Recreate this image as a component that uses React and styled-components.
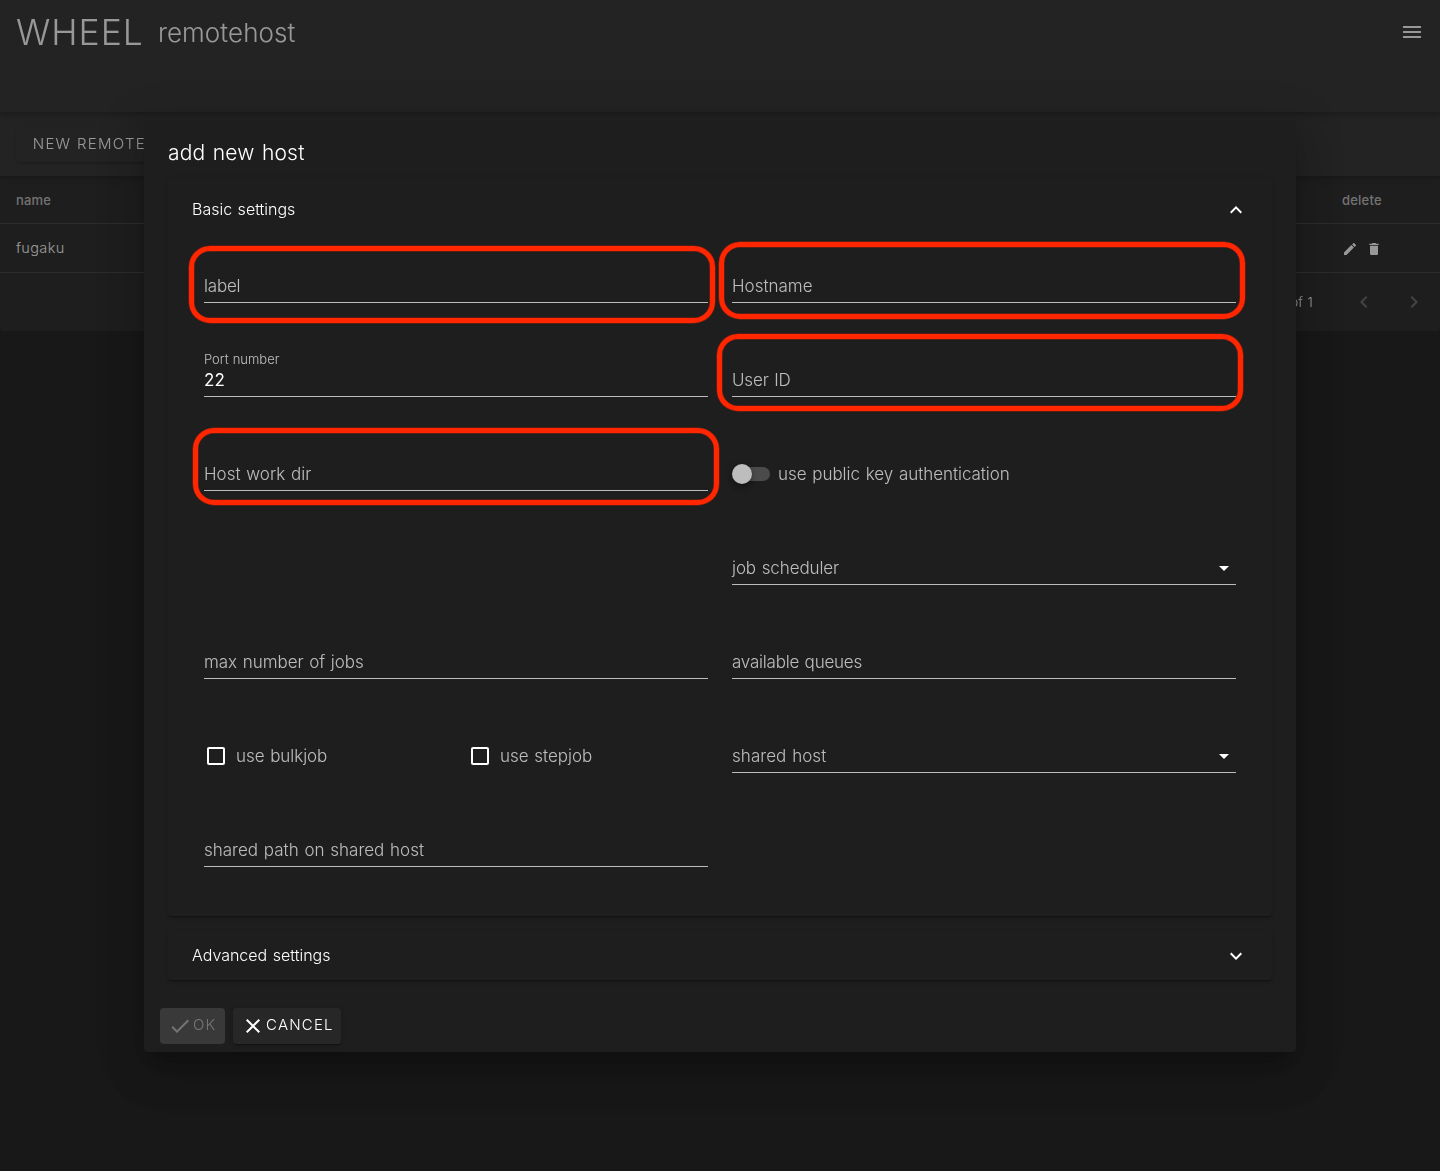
import React from "react";
import styled, { createGlobalStyle } from "styled-components";

const GlobalStyle = createGlobalStyle`
  *, *::before, *::after { box-sizing: border-box; }
  html, body { margin: 0; padding: 0; background: #121212; }
  body {
    font-family: Inter, "Liberation Sans", "Noto Sans CJK JP", sans-serif;
    font-weight: 300;
    color: #fff;
    overflow: hidden;
    -webkit-font-smoothing: antialiased;
  }
`;

const paths = {
  menu: "M3,6H21V8H3V6M3,11H21V13H3V11M3,16H21V18H3V16Z",
  chevronUp: "M7.41,15.41L12,10.83L16.59,15.41L18,14L12,8L6,14L7.41,15.41Z",
  chevronDown: "M7.41,8.58L12,13.17L16.59,8.58L18,10L12,16L6,10L7.41,8.58Z",
  chevronLeft: "M15.41,16.58L10.83,12L15.41,7.41L14,6L8,12L14,18L15.41,16.58Z",
  chevronRight: "M8.59,16.58L13.17,12L8.59,7.41L10,6L16,12L10,18L8.59,16.58Z",
  menuDown: "M7,10L12,15L17,10H7Z",
  pencil:
    "M20.71,7.04C21.1,6.65 21.1,6 20.71,5.63L18.37,3.29C18,2.9 17.35,2.9 16.96,3.29L15.12,5.12L18.87,8.87M3,17.25V21H6.75L17.81,9.93L14.06,6.18L3,17.25Z",
  trash:
    "M19,4H15.5L14.5,3H9.5L8.5,4H5V6H19M6,19A2,2 0 0,0 8,21H16A2,2 0 0,0 18,19V7H6V19Z",
  check: "M21,7L9,19L3.5,13.5L4.91,12.09L9,16.17L19.59,5.59L21,7Z",
  close:
    "M19,6.41L17.59,5L12,10.59L6.41,5L5,6.41L10.59,12L5,17.59L6.41,19L12,13.41L17.59,19L19,17.59L13.41,12L19,6.41Z",
  boxBlank:
    "M19,3H5C3.89,3 3,3.89 3,5V19A2,2 0 0,0 5,21H19A2,2 0 0,0 21,19V5C21,3.89 20.1,3 19,3M19,5V19H5V5H19Z",
};

const Svg = styled.svg`
  display: block;
  flex: none;
  width: ${(p) => p.$size}px;
  height: ${(p) => p.$size}px;
  fill: currentColor;
`;

function Icon({ name, size = 24 }) {
  return (
    <Svg $size={size} viewBox="0 0 24 24" aria-hidden="true">
      <path d={paths[name]} />
    </Svg>
  );
}

/* ---------- page behind the dialog ---------- */

const Page = styled.div`
  display: flex;
  flex-direction: column;
  min-height: 100vh;
  opacity: 0.999;
`;

const barShadow = `0 2px 4px -1px rgba(0,0,0,.2), 0 4px 5px 0 rgba(0,0,0,.14), 0 1px 10px 0 rgba(0,0,0,.12)`;

const AppBar = styled.header`
  position: relative;
  z-index: 2;
  display: flex;
  align-items: flex-start;
  height: 112px;
  padding: 0 16px;
  background: #272727;
  box-shadow: ${barShadow};
`;

const Brand = styled.div`
  padding-top: 1px;
  font-size: 35.5px;
  line-height: 64px;
  letter-spacing: 1px;
  white-space: nowrap;
`;

const PageTitle = styled.div`
  flex: 1;
  padding: 1px 0 0 14px;
  font-size: 26px;
  line-height: 64px;
  letter-spacing: 0.1px;
  white-space: nowrap;
`;

const MenuButton = styled.button`
  display: flex;
  align-items: center;
  height: 64px;
  padding: 0;
  border: 0;
  background: none;
  color: #fff;
`;

const Toolbar = styled.div`
  position: relative;
  z-index: 1;
  display: flex;
  align-items: center;
  height: 64px;
  padding: 0 16px;
  background: #272727;
  box-shadow: ${barShadow};
`;

const buttonShadow = `0 3px 1px -2px rgba(0,0,0,.2), 0 2px 2px 0 rgba(0,0,0,.14), 0 1px 5px 0 rgba(0,0,0,.12)`;

const NewButton = styled.button`
  height: 36px;
  min-width: 200px;
  padding: 0 16px 2px;
  border: 0;
  border-radius: 4px;
  background: #272727;
  color: #fff;
  font: inherit;
  font-size: 15px;
  letter-spacing: 1.3px;
  text-align: left;
  text-indent: 0.7px;
  white-space: nowrap;
  box-shadow: ${buttonShadow};
`;

const Table = styled.section`
  display: flex;
  flex-direction: column;
  height: 155px;
  border-radius: 4px;
  background: #1e1e1e;
`;

const TableRow = styled.div`
  display: flex;
  justify-content: space-between;
  align-items: center;
  height: ${(p) => (p.$head ? 48 : 49)}px;
  padding: 0 0 0 16px;
  border-bottom: 1px solid rgba(255, 255, 255, 0.12);
  font-size: ${(p) => (p.$head ? 13 : 14.5)}px;
  font-weight: ${(p) => (p.$head ? 550 : 300)};
  letter-spacing: ${(p) => (p.$head ? 0.2 : 0.35)}px;
  color: ${(p) => (p.$head ? "rgba(255,255,255,.7)" : "#fff")};
`;

const NameCell = styled.span`
  padding-bottom: 2px;
`;

const ActionCell = styled.div`
  display: flex;
  gap: 8px;
  width: 98px;
  padding-top: 1px;
`;

const Pagination = styled.div`
  display: flex;
  flex: 1;
  align-items: center;
  justify-content: flex-end;
  padding-right: 14px;
  font-size: 13.5px;
  letter-spacing: 0.1px;
  word-spacing: 0.6px;
`;

const PagerButton = styled.span`
  display: flex;
  margin-left: ${(p) => p.$gap}px;
  color: rgba(255, 255, 255, 0.3);
`;

/* ---------- dialog ---------- */

const Scrim = styled.div`
  position: fixed;
  inset: 0;
  z-index: 5;
  display: flex;
  align-items: flex-start;
  justify-content: center;
  padding-top: 120px;
  background: rgba(33, 33, 33, 0.46);
`;

const Dialog = styled.div`
  width: 1152px;
  height: 932px;
  border-radius: 4px;
  background: #1e1e1e;
  box-shadow: 0 11px 15px -7px rgba(0, 0, 0, 0.2), 0 24px 38px 3px rgba(0, 0, 0, 0.14),
    0 9px 46px 8px rgba(0, 0, 0, 0.12);
`;

const DialogTitle = styled.h2`
  margin: 0;
  padding: 17px 24px 9px;
  font-size: 21px;
  font-weight: 350;
  line-height: 32px;
  letter-spacing: 0.2px;
  word-spacing: 1.2px;
`;

const Panels = styled.div`
  display: flex;
  flex-direction: column;
  gap: 16px;
  padding: 0 24px 20px;
`;

const Panel = styled.section`
  border-radius: 4px;
  background: #1e1e1e;
  box-shadow: ${buttonShadow};
`;

const PanelHeader = styled.div`
  display: flex;
  align-items: center;
  justify-content: space-between;
  height: ${(p) => (p.$open ? 64 : 48)}px;
  padding: 0 24px;
`;

const PanelTitle = styled.span`
  padding-bottom: 2px;
  font-size: 16px;
  font-weight: 350;
  letter-spacing: 0;
  word-spacing: 1px;
`;

const FormGrid = styled.div`
  display: grid;
  grid-template-columns: 1fr 1fr;
  grid-auto-rows: 94px;
  padding: 0 24px 16px;
`;

const Cell = styled.div`
  display: flex;
  gap: 24px;
  padding: 12px;
  height: 94px;
`;

const Half = styled.div`
  flex: 1;
`;

const Field = styled.div`
  position: relative;
  display: flex;
  align-items: flex-start;
  justify-content: space-between;
  width: 100%;
  height: 49px;
  padding-top: 16px;
  border-bottom: 1px solid rgba(255, 255, 255, 0.7);
`;

const Label = styled.label`
  font-size: 17px;
  line-height: 32px;
  letter-spacing: ${(p) => p.$spacing || 0}px;
  word-spacing: 1px;
  white-space: nowrap;
  color: rgba(255, 255, 255, 0.7);
`;

const FilledField = styled(Field)`
  flex-direction: column;
  justify-content: flex-start;
  padding-top: 3px;
`;

const FloatingLabel = styled.span`
  font-size: 13px;
  line-height: 16px;
  letter-spacing: 0;
  word-spacing: 0.5px;
  white-space: nowrap;
  color: rgba(255, 255, 255, 0.7);
`;

const Value = styled.span`
  padding-top: 1px;
  font-size: 17px;
  font-weight: 370;
  line-height: 24px;
  letter-spacing: 0.2px;
`;

const SelectArrow = styled.span`
  display: flex;
  align-items: center;
  height: 32px;
`;

/* Annotation frame that lies over a required field. */
const Highlight = styled.div`
  position: absolute;
  left: ${(p) => p.$left}px;
  top: ${(p) => p.$top}px;
  width: 526px;
  height: 77px;
  border: 5px solid #ff2600;
  border-radius: 21px;
  box-shadow: 0 0 0 0.5px rgba(255, 38, 0, 0.5), inset 0 0 0 0.5px rgba(255, 38, 0, 0.5);
  pointer-events: none;
`;

const Choice = styled.div`
  display: flex;
  align-items: center;
  gap: 8px;
  height: 32px;
  margin-top: 16px;
`;

const SwitchTrack = styled.span`
  display: flex;
  align-items: center;
  width: 36px;
  height: 14px;
  margin-left: 2px;
  border-radius: 8px;
  background: rgba(255, 255, 255, 0.2);
`;

const SwitchThumb = styled.span`
  width: 20px;
  height: 20px;
  margin-left: -2px;
  flex: none;
  border-radius: 50%;
  background: #bdbdbd;
  box-shadow: 0 2px 4px -1px rgba(0, 0, 0, 0.2), 0 4px 5px 0 rgba(0, 0, 0, 0.14),
    0 1px 10px 0 rgba(0, 0, 0, 0.12);
`;

const Actions = styled.div`
  display: flex;
  gap: 8px;
  padding: 8px 16px;
`;

const ActionButton = styled.button`
  display: flex;
  align-items: center;
  justify-content: flex-start;
  gap: 1px;
  width: ${(p) => p.$width}px;
  height: 36px;
  padding: 0 8px;
  border: 0;
  border-radius: 4px;
  background: #272727;
  color: #fff;
  font: inherit;
  font-size: 15px;
  letter-spacing: 1.2px;
  box-shadow: ${buttonShadow};

  &:disabled {
    background: rgba(255, 255, 255, 0.12);
    color: rgba(255, 255, 255, 0.3);
    box-shadow: none;
  }
`;

const ButtonText = styled.span`
  padding-bottom: 3px;
`;

function TextField({ label, spacing, select, mark }) {
  return (
    <Cell>
      <Field>
        <Label $spacing={spacing}>{label}</Label>
        {select && (
          <SelectArrow>
            <Icon name="menuDown" />
          </SelectArrow>
        )}
        {mark && <Highlight $left={mark[0]} $top={mark[1]} />}
      </Field>
    </Cell>
  );
}

function Checkbox({ label, spacing }) {
  return (
    <Half>
      <Choice>
        <Icon name="boxBlank" />
        <Label $spacing={spacing}>{label}</Label>
      </Choice>
    </Half>
  );
}

export default function App() {
  return (
    <>
      <GlobalStyle />
      <Page>
        <AppBar>
          <Brand>WHEEL</Brand>
          <PageTitle>remotehost</PageTitle>
          <MenuButton aria-label="menu">
            <Icon name="menu" />
          </MenuButton>
        </AppBar>
        <Toolbar>
          <NewButton>NEW REMOTE</NewButton>
        </Toolbar>
        <Table>
          <TableRow $head>
            <span>name</span>
            <ActionCell>delete</ActionCell>
          </TableRow>
          <TableRow>
            <NameCell>fugaku</NameCell>
            <ActionCell>
              <Icon name="pencil" size={16} />
              <Icon name="trash" size={16} />
            </ActionCell>
          </TableRow>
          <Pagination>
            1-1 of 1
            <PagerButton $gap={39}>
              <Icon name="chevronLeft" />
            </PagerButton>
            <PagerButton $gap={26}>
              <Icon name="chevronRight" />
            </PagerButton>
          </Pagination>
        </Table>
      </Page>

      <Scrim>
        <Dialog role="dialog">
          <DialogTitle>add new host</DialogTitle>
          <Panels>
            <Panel>
              <PanelHeader $open>
                <PanelTitle>Basic settings</PanelTitle>
                <Icon name="chevronUp" />
              </PanelHeader>
              <FormGrid>
                <TextField label="label" spacing={-0.2} mark={[-15, -8]} />
                <TextField label="Hostname" mark={[-13, -12]} />
                <Cell>
                  <FilledField>
                    <FloatingLabel>Port number</FloatingLabel>
                    <Value>22</Value>
                  </FilledField>
                </Cell>
                <TextField label="User ID" spacing={-0.15} mark={[-15, -14]} />
                <TextField label="Host work dir" mark={[-11, -14]} />
                <Cell>
                  <Choice>
                    <SwitchTrack>
                      <SwitchThumb />
                    </SwitchTrack>
                    <Label $spacing={-0.04}>use public key authentication</Label>
                  </Choice>
                </Cell>
                <Cell />
                <TextField label="job scheduler" spacing={-0.1} select />
                <TextField label="max number of jobs" spacing={-0.05} />
                <TextField label="available queues" spacing={-0.22} />
                <Cell>
                  <Checkbox label="use bulkjob" spacing={-0.06} />
                  <Checkbox label="use stepjob" spacing={-0.02} />
                </Cell>
                <TextField label="shared host" spacing={0.05} select />
                <TextField label="shared path on shared host" />
              </FormGrid>
            </Panel>
            <Panel>
              <PanelHeader>
                <PanelTitle>Advanced settings</PanelTitle>
                <Icon name="chevronDown" />
              </PanelHeader>
            </Panel>
          </Panels>
          <Actions>
            <ActionButton $width={65} disabled>
              <Icon name="check" />
              <ButtonText>OK</ButtonText>
            </ActionButton>
            <ActionButton $width={108}>
              <Icon name="close" />
              <ButtonText>CANCEL</ButtonText>
            </ActionButton>
          </Actions>
        </Dialog>
      </Scrim>
    </>
  );
}
